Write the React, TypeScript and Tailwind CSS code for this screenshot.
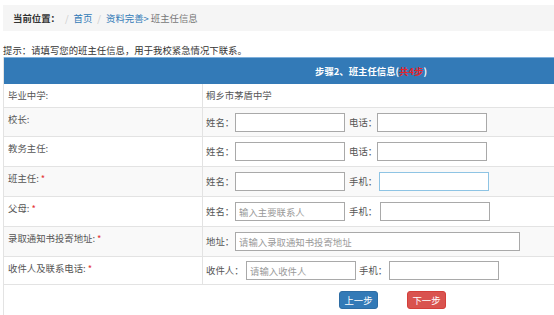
import React from "react";

const font = { fontFamily: '"Noto Sans CJK SC", "Noto Sans", sans-serif' };

function Input({ w, ph, focus }: { w: string; ph?: string; focus?: boolean }) {
  return (
    <input
      placeholder={ph}
      className={`${w} shrink-0 h-[19px] px-[3px] text-[9.4px] outline-none placeholder:text-[#999] bg-white border ${
        focus ? "border-[#8ec4e4]" : "border-[#a9a9a9]"
      }`}
    />
  );
}

function Label({ w, ml, children }: { w: string; ml?: string; children: React.ReactNode }) {
  return <span className={`${w} ${ml ?? ""} shrink-0 whitespace-nowrap overflow-visible`}>{children}</span>;
}

function Row({
  label,
  req,
  h,
  gray,
  children,
}: {
  label: string;
  req?: boolean;
  h: string;
  gray?: boolean;
  children: React.ReactNode;
}) {
  return (
    <div className={`flex ${h} border-b border-[#e3e3e3] ${gray ? "bg-[#f9f9f9]" : "bg-white"}`}>
      <div className="w-[199px] shrink-0 border-r border-[#e3e3e3] pl-[4px] pt-[5px] leading-[13px] text-[#555]">
        {label}:{req && <span className="text-[#e4393c] ml-[2px]">*</span>}
      </div>
      <div className="flex-1 flex items-center pl-[3px] text-[#555]">{children}</div>
    </div>
  );
}

export default function App() {
  return (
    <div className="w-[554px] h-[315px] bg-white overflow-hidden text-[9.4px] text-[#333]" style={font}>
      <div className="pt-[5px] pl-[3px]">
        <div className="h-[26px] bg-[#f5f5f5] flex items-center pl-[10px]">
          <span className="font-bold text-[#333]">当前位置：</span>
          <span className="px-[5px] text-[#ccc]">/</span>
          <span className="text-[#337ab7]">首页</span>
          <span className="px-[5px] text-[#ccc]">/</span>
          <span className="text-[#337ab7]">资料完善&gt;</span>
          <span className="text-[#777] ml-[2px]">班主任信息</span>
        </div>
      </div>
      <div className="pl-[3px] mt-[13px] leading-[13px] text-[#333]">
        提示：请填写您的班主任信息，用于我校紧急情况下联系。
      </div>
      <div className="ml-[3px] border-l border-[#e3e3e3]">
        <div className="h-[27px] bg-[#337ab7] border-t border-[#7fb0dc] flex items-center">
          <div className="w-[199px]" />
          <div className="w-[336px] text-center font-bold text-white">
            步骤2、班主任信息(<span className="text-[#e4232a]">共4步</span>)
          </div>
        </div>
        <Row label="毕业中学" h="h-[24px]">
          <span className="self-start pt-[5px] leading-[13px]">桐乡市茅盾中学</span>
        </Row>
        <Row label="校长" h="h-[29px]" gray>
          <Label w="w-[29px]">姓名：</Label>
          <Input w="w-[110px]" />
          <Label w="w-[28px]" ml="ml-[4px]">电话：</Label>
          <Input w="w-[110px]" />
        </Row>
        <Row label="教务主任" h="h-[30px]">
          <Label w="w-[29px]">姓名：</Label>
          <Input w="w-[110px]" />
          <Label w="w-[28px]" ml="ml-[4px]">电话：</Label>
          <Input w="w-[110px]" />
        </Row>
        <Row label="班主任" req h="h-[30px]" gray>
          <Label w="w-[29px]">姓名：</Label>
          <Input w="w-[110px]" />
          <Label w="w-[30px]" ml="ml-[4px]">手机：</Label>
          <Input w="w-[110px]" focus />
        </Row>
        <Row label="父母" req h="h-[30px]">
          <Label w="w-[29px]">姓名：</Label>
          <Input w="w-[110px]" ph="输入主要联系人" />
          <Label w="w-[31px]" ml="ml-[4px]">手机：</Label>
          <Input w="w-[110px]" />
        </Row>
        <Row label="录取通知书投寄地址" req h="h-[30px]" gray>
          <Label w="w-[29px]">地址：</Label>
          <Input w="w-[285px]" ph="请输入录取通知书投寄地址" />
        </Row>
        <Row label="收件人及联系电话" req h="h-[28px]">
          <Label w="w-[40px]">收件人：</Label>
          <Input w="w-[110px]" ph="请输入收件人" />
          <Label w="w-[30px]" ml="ml-[3px]">手机：</Label>
          <Input w="w-[110px]" />
        </Row>
        <div className="h-[40px] flex items-start pt-[6px] pl-[335px] gap-[29px]">
          <button className="w-[39px] h-[18px] rounded-[3px] bg-[#337ab7] border border-[#2e6da4] text-white text-[9.4px] leading-[16px]">
            上一步
          </button>
          <button className="w-[39px] h-[18px] rounded-[3px] bg-[#d9534f] border border-[#d43f3a] text-white text-[9.4px] leading-[16px]">
            下一步
          </button>
        </div>
      </div>
    </div>
  );
}
